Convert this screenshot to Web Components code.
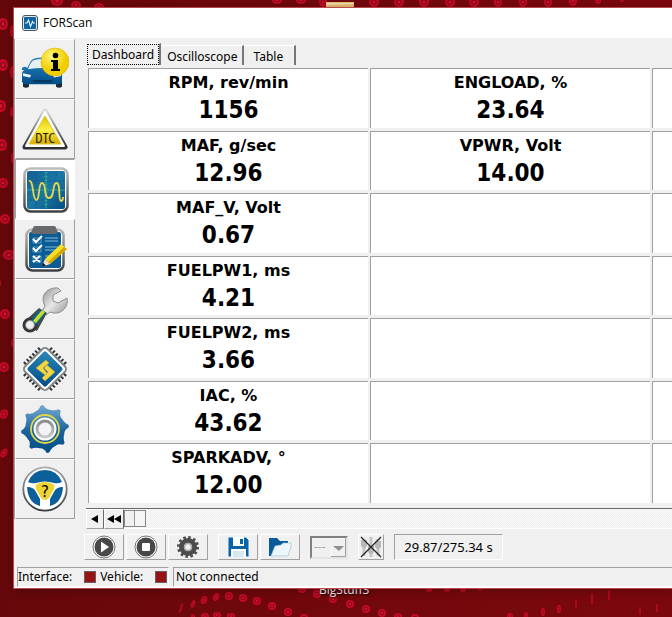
<!DOCTYPE html>
<html lang="en">
<head>
<meta charset="utf-8">
<title>FORScan</title>
<style>
    body {
        margin: 0;
        font: 12px/16px "Noto Sans", "DejaVu Sans", sans-serif;
        color: #000;
    }
</style>
</head>
<body>
<desktop-screen>
    <app-window caption="FORScan">
        <side-bar slot="side"></side-bar>
        <tab-strip></tab-strip>
        <gauge-grid>
            <gauge-tile label="RPM, rev/min">1156</gauge-tile>
            <gauge-tile label="MAF, g/sec">12.96</gauge-tile>
            <gauge-tile label="MAF_V, Volt">0.67</gauge-tile>
            <gauge-tile label="FUELPW1, ms">4.21</gauge-tile>
            <gauge-tile label="FUELPW2, ms">3.66</gauge-tile>
            <gauge-tile label="IAC, %">43.62</gauge-tile>
            <gauge-tile label="SPARKADV, °">12.00</gauge-tile>
            <gauge-tile label="ENGLOAD, %">23.64</gauge-tile>
            <gauge-tile label="VPWR, Volt">14.00</gauge-tile>
            <gauge-tile></gauge-tile>
            <gauge-tile></gauge-tile>
            <gauge-tile></gauge-tile>
            <gauge-tile></gauge-tile>
            <gauge-tile></gauge-tile>
            <gauge-tile></gauge-tile>
            <gauge-tile></gauge-tile>
            <gauge-tile></gauge-tile>
            <gauge-tile></gauge-tile>
            <gauge-tile></gauge-tile>
            <gauge-tile></gauge-tile>
            <gauge-tile></gauge-tile>
        </gauge-grid>
        <time-scroller></time-scroller>
        <tool-bar>29.87/275.34 s</tool-bar>
        <status-bar slot="status">Not connected</status-bar>
    </app-window>
</desktop-screen>

<script>
// wallpaper rings: x, y, rx, ry, tilt
const RINGS = [
    [3, 24, 5, 6, 0], [3, 65, 5, 6, 0], [1, 106, 5, 6, 0], [2, 145, 5, 6, 0], [3, 183, 5, 5, 0],
    [5, 219, 5, 5, 0], [9, 255, 6, 5, 0], [0, 283, 1, 3, 0], [5, 314, 5, 5, 20], [4, 367, 5, 5, 30],
    [4, 414, 4, 5, 30], [4, 453, 3, 5, 30], [13, 31, 3, 6, 0], [13, 72, 3, 6, 0], [13, 112, 3, 5, 0],
    [13, 158, 2, 5, 0], [13, 343, 2, 4, 0],
    [57, 1, 6, 5, 0], [76, 5, 5, 4, 0], [99, 7, 5, 4, 0], [277, 0, 5, 4, 0], [301, 0, 5, 4, 0], [323, 2, 4, 5, 0],
    [374, 2, 5, 5, 0], [399, 2, 5, 5, 0], [424, 2, 5, 5, 0], [450, 2, 5, 5, 0], [474, 2, 5, 5, 0],
    [498, 2, 4, 5, 0], [523, 2, 4, 5, 0], [548, 2, 4, 5, 0], [573, 1, 4, 5, 0], [598, 0, 3, 4, 0], [622, 0, 2, 2, 0],
    [181, 608, 1, 5, 15], [193, 604, 2, 4, 20], [204, 600, 3, 4, 25], [216, 597, 3, 4, 25], [229, 596, 4, 4, 0],
    [243, 598, 4, 4, 0], [257, 601, 4, 4, 0], [272, 606, 4, 4, 0], [288, 612, 4, 4, 0], [304, 618, 4, 4, 0],
    [193, 617, 2, 3, 0], [205, 616, 4, 3, 0], [217, 615, 4, 3, 0], [231, 616, 4, 3, 0],
    [302, 589, 4, 4, 0], [317, 594, 4, 4, 0], [333, 599, 4, 4, 0], [350, 604, 4, 4, 0], [366, 609, 4, 4, 0],
    [382, 613, 4, 4, 0], [398, 616, 4, 3, 0], [415, 618, 4, 4, 0],
    [429, 589, 3, 3, 0], [447, 589, 3, 3, 0], [463, 589, 3, 3, 0], [480, 589, 2, 2, 0],
    [510, 616, 3, 3, 0], [526, 615, 2, 3, 0], [543, 612, 2, 4, 0], [559, 609, 2, 4, 0], [576, 604, 1, 4, 0],
    [592, 599, 1, 5, 0], [609, 595, 1, 5, 0], [640, 611, 1, 4, 0], [657, 608, 1, 4, 0]
];

class DesktopScreen extends HTMLElement {
    connectedCallback() {
        const rings = RINGS.map(([x, y, rx, ry, r]) =>
            `<g transform="translate(${x} ${y}) rotate(${r})"><ellipse rx="${rx}" ry="${ry}" fill="#c80a26"/><ellipse rx="${rx * .55}" ry="${ry * .55}" fill="#800914"/><ellipse rx="${rx * .32}" ry="${ry * .32}" fill="#d8122e"/></g>`
        ).join('');
        this.attachShadow({ mode: 'open' });
        this.shadowRoot.innerHTML = `
            <style>
                :host {
                    display: flex;
                    position: relative;
                    box-sizing: border-box;
                    min-height: 100vh;
                    padding: 7px 0 28px 13px;
                    overflow: hidden;
                    background: linear-gradient(90deg, #66080b, #72080c 50%, #7c080c);
                }
                .wallpaper {
                    position: absolute;
                    left: 0;
                    top: 0;
                }
                .shortcut {
                    position: absolute;
                    left: 319px;
                    bottom: 19px;
                    color: #f4eeee;
                    text-shadow: 1px 1px 2px #000;
                    font-family: "Open Sans", "Noto Sans", sans-serif;
                }
                ::slotted(app-window) {
                    flex: 1;
                    min-width: 0;
                }
            </style>
            <svg class="wallpaper" width="672" height="617" aria-hidden="true">
                ${rings}
                <rect x="326" y="2" width="28" height="6" fill="#e5bd72"/>
                <path d="M327 3h26v1l-26 1z" fill="#f5dcb0"/>
            </svg>
            <span class="shortcut">BigStuff3</span>
            <slot></slot>
        `;
    }
}

class AppWindow extends HTMLElement {
    connectedCallback() {
        this.attachShadow({ mode: 'open' });
        this.shadowRoot.innerHTML = `
            <style>
                :host {
                    display: flex;
                    flex-direction: column;
                    position: relative;
                    background: #f0f0f0;
                    border: 1px solid #b9474e;
                    border-right: 0;
                    box-shadow: 0 2px 10px rgba(0, 0, 0, .25);
                }
                header {
                    display: flex;
                    align-items: center;
                    gap: 5px;
                    height: 30px;
                    padding-left: 8px;
                    background: #fff;
                    font-family: "Open Sans", "Noto Sans", sans-serif;
                }
                h1 {
                    margin: 0;
                    font-size: 12px;
                    font-weight: 400;
                }
                .body {
                    display: flex;
                    flex: 1;
                }
                main {
                    display: flex;
                    flex: 1;
                    flex-direction: column;
                    min-width: 0;
                    padding-left: 11px;
                }
            </style>
            <header>
                <svg width="16" height="16" viewBox="0 0 16 16" aria-hidden="true">
                    <rect x=".5" y=".5" width="15" height="15" rx="2.5" fill="#e2e8ec" stroke="#42545f"/>
                    <rect x="2" y="2" width="12" height="12" rx="1" fill="#0f64a0"/>
                    <path d="M3 8h2l1.500-3 2 6.500 2-5 1 1.500h1.500" fill="none" stroke="#d8f2ff" stroke-width="1.200"/>
                </svg>
                <h1>${this.getAttribute('caption')}</h1>
            </header>
            <div class="body">
                <slot name="side"></slot>
                <main><slot></slot></main>
            </div>
            <slot name="status"></slot>
        `;
    }
}

// eight-toothed outline round (24, 24)
function gearPath() {
    const at = (deg, r) => {
        const a = deg * Math.PI / 180;
        return `${(24 + r * Math.cos(a)).toFixed(1)} ${(24 + r * Math.sin(a)).toFixed(1)}`;
    };
    let d = '';
    for (let i = 0; i < 8; i++) {
        const a = -97 + i * 45;
        d += `${i ? 'L' : 'M'}${at(a - 3, 24)}L${at(a + 3, 24)}Q${at(a + 10, 19)} ${at(a + 22, 20)}Q${at(a + 34, 20)} ${at(a + 42, 24)}`;
    }
    return d + 'z';
}

const SIDE_ICONS = [
    ['Vehicle info', `
        <defs>
            <linearGradient id="body" x2="0" y2="1"><stop stop-color="#2f86be"/><stop offset="1" stop-color="#004c88"/></linearGradient>
            <radialGradient id="ball" cx=".4" cy=".3"><stop stop-color="#fff780"/><stop offset="1" stop-color="#f2cd00"/></radialGradient>
        </defs>
        <g transform="translate(0 4) scale(1 .84)">
            <path d="M2 36h6v9q-3 2-6 0zM35 36h6v9q-3 2-6 0z" fill="#1d2a33"/>
            <path d="M1 25q-1-4 4-4l1 2 4-9q2-4 11-4t12 4l4 9q5 6 4 12v5q-1 2-4 2H5q-3 0-4-3v-9q0-4 3-5z" fill="url(#body)"/>
            <path d="M7 24q3-10 6-11 8-2 17 0l5 11q-13-3-28 0z" fill="#e4f0f8"/>
            <path d="M2 29l8 2-1 3-7-2zM40 29l-8 2 1 3 7-2z" fill="#eef6fa"/>
            <path d="M11 37h21l-3 3H14z" fill="#06385f"/>
        </g>
        <circle cx="34" cy="17" r="14" fill="url(#ball)" stroke="#dcb400" stroke-width=".6"/>
        <circle cx="34.500" cy="10.500" r="2.800"/>
        <path d="M30 15h7v9h2v2h-9v-2h2v-7h-2z"/>`],
    ['Trouble codes', `
        <defs>
            <linearGradient id="rim" x2="0" y2="1"><stop stop-color="#d9d9d9"/><stop offset="1" stop-color="#2c3035"/></linearGradient>
            <linearGradient id="sign" x2="0" y2="1"><stop stop-color="#d9c000"/><stop offset=".5" stop-color="#fff04a"/><stop offset="1" stop-color="#d5aa00"/></linearGradient>
        </defs>
        <path d="M24 6L44 42H4z" fill="url(#rim)" stroke="url(#rim)" stroke-width="5" stroke-linejoin="round"/>
        <path d="M24 7L43 41H5z" fill="#fff" stroke="#fff" stroke-width="2" stroke-linejoin="round"/>
        <path d="M24 11L40 39H8z" fill="url(#sign)" stroke="#e2c41c" stroke-linejoin="round"/>
        <text x="24" y="38" text-anchor="middle" font-family="Open Sans, sans-serif" font-size="15" font-stretch="condensed" fill="#252000">DTC</text>`],
    ['Live data', `
        <defs>
            <linearGradient id="frame" x2="0" y2="1"><stop stop-color="#bdbdbd"/><stop offset="1" stop-color="#3f4144"/></linearGradient>
            <linearGradient id="screen" x2="1" y2="1"><stop stop-color="#145f90"/><stop offset=".5" stop-color="#1a78a5"/><stop offset="1" stop-color="#075083"/></linearGradient>
        </defs>
        <rect x="2.500" y="2.500" width="43" height="43" rx="6" fill="#fff" stroke="url(#frame)" stroke-width="2.500"/>
        <rect x="5" y="5" width="38" height="38" rx="2" fill="url(#screen)"/>
        <path d="M5 15h38M5 34h38M14 5v38M34 5v38" stroke="#115582" stroke-dasharray="1 1"/>
        <path d="M24 6v36M5 24h38" stroke="#33a48f" stroke-width="1"/>
        <path d="M24 6v36" stroke="#33a48f" stroke-width="3" stroke-dasharray="1 3"/>
        <path d="M7 15C12 14 10 34 14.500 34C18 34 16 17 20 17C25 17 21 32 27 32C33 32 30 17 34.500 17C39 17 36 35 39 35C40.500 35 41 33 41 31" fill="none" stroke="#ead64b" stroke-width="1.800"/>`],
    ['Tests', `
        <defs>
            <linearGradient id="board" x2="0" y2="1"><stop stop-color="#b8b8b8"/><stop offset="1" stop-color="#3f4144"/></linearGradient>
        </defs>
        <rect x="5.500" y="4.500" width="37" height="41" rx="6" fill="#fff" stroke="url(#board)" stroke-width="2.500"/>
        <rect x="8" y="7" width="32" height="36" rx="2" fill="#0b5c94"/>
        <path d="M14 1h19q2 0 2 2l2 4q-1 2-3 2H13q-3 0-3-2l2-4q0-2 2-2z" fill="#68696c"/>
        <path d="M12 13h8v5h-8zM12 22h8v5h-8zM12 31h8v6h-8z" fill="none" stroke="#7db4d2" stroke-width=".7"/>
        <path d="M12 14l3 3 6-6M12 23l3 3 6-6M12 31l7 6M19 31l-7 6" fill="none" stroke="#fff" stroke-width="2"/>
        <path d="M24 13h13M24 16h13M24 22h13M24 25h10M24 31h6" stroke="#7fb9d7"/>
        <path d="M24 34l16-15 6 5-17 15z" fill="#f8df25"/>
        <path d="M27 37l16-15 3 2-17 15z" fill="#d2a800"/>
        <path d="M24 34l5 5-8 3z" fill="#f2e2c8"/>
        <path d="M21 42l1-4 3 2.500z" fill="#111"/>`],
    ['Service functions', `
        <defs>
            <linearGradient id="steel" x2="1" y2="1"><stop stop-color="#8e9092"/><stop offset=".5" stop-color="#e8e8e8"/><stop offset="1" stop-color="#909294"/></linearGradient>
        </defs>
        <path d="M24 21C18 10 27 2 37 3l3 3-8 4v6l5 2 9-5c2 10-7 18-17 14l-4 3-4-4z" fill="url(#steel)" stroke="#8a8c8e"/>
        <path d="M18 23l8 5-10 18-14-8z" fill="#434950"/>
        <circle cx="9" cy="40" r="7.500" fill="#34383d"/>
        <path d="M18 25l6 4-9 11-5-4z" fill="#0a6c86"/>
        <path d="M21 25l3 2-9 11-3-2z" fill="#c8df32"/>
        <circle cx="9" cy="40" r="4.200" fill="#f0f0f0" stroke="#b5b7b8"/>`],
    ['Module configuration', `
        <defs>
            <linearGradient id="chip" x2="1" y2="1"><stop stop-color="#2b88b8"/><stop offset="1" stop-color="#004c87"/></linearGradient>
        </defs>
        <g transform="rotate(45 24 24)">
            <path d="M14 4v40M18 4v40M22 4v40M26 4v40M30 4v40M34 4v40M4 14h40M4 18h40M4 22h40M4 26h40M4 30h40M4 34h40" stroke="#303438" stroke-width="2"/>
            <rect x="8" y="8" width="32" height="32" rx="4" fill="#fff" stroke="#85888b" stroke-width="2"/>
            <rect x="11" y="11" width="26" height="26" rx="2" fill="url(#chip)"/>
        </g>
        <path d="M25 15l-10 8 9 7 2-2-4-5 6-5zM26 20l8 7-10 9-3-3 6-6-4-4z" fill="#f1d747" stroke="#bca22b" stroke-width=".5"/>`],
    ['Settings', `
        <defs>
            <linearGradient id="gear" x2="0" y2="1"><stop stop-color="#75abd1"/><stop offset=".55" stop-color="#17629b"/><stop offset="1" stop-color="#034c84"/></linearGradient>
            <linearGradient id="nut" x2="0" y2="1"><stop stop-color="#888b8e"/><stop offset="1" stop-color="#c9cacb"/></linearGradient>
        </defs>
        <path d="${gearPath()}" fill="url(#gear)"/>
        <circle cx="24" cy="24" r="14" fill="none" stroke="#e4d646" stroke-width="1.800"/>
        <circle cx="24" cy="24" r="9" fill="none" stroke="#fff" stroke-width="5"/>
        <circle cx="24" cy="24" r="8" fill="#f4f4f4" stroke="url(#nut)" stroke-width="3"/>`],
    ['Help', `
        <defs>
            <linearGradient id="ring" x2="0" y2="1"><stop stop-color="#a8abad"/><stop offset="1" stop-color="#393d40"/></linearGradient>
        </defs>
        <circle cx="24" cy="24" r="21.700" fill="#fff" stroke="url(#ring)" stroke-width="1.800"/>
        <path d="M7 17Q12 5 24 5t17 12q-4 2-8 1-9-3-18 0-4 1-8-1z" fill="#0b609b"/>
        <path d="M6 22q7 0 9 5l4 7v7Q7 38 6 22zM42 22q-7 0-9 5l-4 7v7q12-3 13-19z" fill="#0b609b"/>
        <path d="M16 19q8-4 16 0 2 1 1 5l-5 9q-4 4-8 0l-5-9q-1-4 1-5z" fill="#edd433"/>
        <text x="24" y="32" text-anchor="middle" font-family="DejaVu Sans, sans-serif" font-size="15">?</text>`]
];

class SideBar extends HTMLElement {
    connectedCallback() {
        const buttons = SIDE_ICONS.map(([name, art], i) => `
            <button type="button" aria-label="${name}"${i === 2 ? ' class="active" aria-pressed="true"' : ''}>
                <svg width="48" height="48" viewBox="0 0 48 48">${art}</svg>
            </button>`).join('');
        this.attachShadow({ mode: 'open' });
        this.shadowRoot.innerHTML = `
            <style>
                :host { display: block; padding-top: 1px; }
                nav {
                    display: flex;
                    flex-direction: column;
                    border-left: 1px solid #a0a0a0;
                }
                button {
                    display: flex;
                    align-items: center;
                    justify-content: center;
                    box-sizing: border-box;
                    width: 60px;
                    height: 60px;
                    padding: 0;
                    background: #f0f0f0;
                    border: 1px solid #fff;
                    border-right-color: #a0a0a0;
                    border-bottom-color: #a0a0a0;
                }
                button.active {
                    padding: 2px 0 0 2px;
                    background: #fff;
                    border-color: #a0a0a0 #fff #fff #a0a0a0;
                }
            </style>
            <nav>${buttons}</nav>
        `;
    }
}

class TabStrip extends HTMLElement {
    connectedCallback() {
        this.attachShadow({ mode: 'open' });
        this.shadowRoot.innerHTML = `
            <style>
                :host {
                    display: block;
                    padding: 5px 0 0 1px;
                }
                div {
                    display: flex;
                    align-items: flex-end;
                    height: 22px;
                    padding-bottom: 3px;
                }
                button {
                    box-sizing: border-box;
                    height: 20px;
                    padding: 2px 5px 0 6px;
                    border: 0;
                    border-top: 1px solid #fff;
                    border-right: 2px solid #777;
                    background: #f0f0f0;
                    font: inherit;
                    line-height: 16px;
                }
                button[aria-selected="true"] {
                    height: 22px;
                    padding: 0;
                }
                button:last-child { padding: 2px 11px 0 9px; }
                span {
                    display: block;
                    padding: 2px 4px 1px;
                    border: 1px dotted #000;
                }
            </style>
            <div role="tablist">
                <button type="button" role="tab" aria-selected="true"><span>Dashboard</span></button>
                <button type="button" role="tab" aria-selected="false">Oscilloscope</button>
                <button type="button" role="tab" aria-selected="false">Table</button>
            </div>
        `;
    }
}

class GaugeGrid extends HTMLElement {
    connectedCallback() {
        this.attachShadow({ mode: 'open' });
        this.shadowRoot.innerHTML = `
            <style>
                :host {
                    display: grid;
                    flex: 1;
                    grid-auto-flow: column;
                    grid-template-rows: repeat(7, 1fr);
                    grid-auto-columns: 280px;
                    gap: 3px 2px;
                    margin-left: 2px;
                    padding-bottom: 5px;
                    overflow: hidden;
                }
            </style>
            <slot></slot>
        `;
    }
}

class GaugeTile extends HTMLElement {
    connectedCallback() {
        const label = this.getAttribute('label') || '';
        this.attachShadow({ mode: 'open' });
        this.shadowRoot.innerHTML = `
            <style>
                :host {
                    display: flex;
                    flex-direction: column;
                    align-items: center;
                    background: #fff;
                    border-top: 1px solid #a0a0a0;
                    border-left: 1px solid #a0a0a0;
                    font-family: "DejaVu Sans", sans-serif;
                    font-weight: 700;
                }
                .label {
                    font-size: 16px;
                    line-height: 27px;
                }
                .value {
                    font-family: "DejaVu Sans Condensed", "DejaVu Sans", sans-serif;
                    font-stretch: condensed;
                    font-size: 24px;
                    line-height: 29px;
                }
            </style>
            ${label ? `<div class="label">${label}</div><div class="value"><slot></slot></div>` : ''}
        `;
    }
}

class TimeScroller extends HTMLElement {
    connectedCallback() {
        this.attachShadow({ mode: 'open' });
        this.shadowRoot.innerHTML = `
            <style>
                :host {
                    display: flex;
                    height: 20px;
                    background: #f0f0f0;
                    border-top: 1px solid #696969;
                }
                button {
                    display: flex;
                    align-items: center;
                    justify-content: center;
                    box-sizing: border-box;
                    width: 18px;
                    padding: 0;
                    border: 1px solid #fff;
                    border-right-color: #696969;
                    border-bottom-color: #a0a0a0;
                    background: #f0f0f0;
                }
                button + button { width: 20px; }
                input {
                    flex: 1;
                    min-width: 0;
                    height: 19px;
                    margin: 0;
                    appearance: none;
                    background: repeating-conic-gradient(#fff 0 25%, #eaeaea 0 50%) 0 0 / 2px 2px;
                    border-bottom: 1px solid #fff;
                }
                input::-webkit-slider-thumb {
                    appearance: none;
                    box-sizing: border-box;
                    width: 22px;
                    height: 17px;
                    border: 1px solid #888;
                    background: linear-gradient(90deg, #f0f0f0 9px, #999 9px, #999 10px, #f5f5f5 10px);
                }
            </style>
            <button type="button" aria-label="Back"><svg width="8" height="8"><path d="M7 0v8L0 4z"/></svg></button>
            <button type="button" aria-label="Fast back"><svg width="14" height="8"><path d="M7 0v8L0 4zM14 0v8L7 4z"/></svg></button>
            <input type="range" min="0" max="100" value="0" aria-label="Position">
        `;
    }
}

class ToolBar extends HTMLElement {
    connectedCallback() {
        this.attachShadow({ mode: 'open' });
        this.shadowRoot.innerHTML = `
            <style>
                :host {
                    display: flex;
                    align-items: center;
                    gap: 2px;
                    height: 26px;
                    padding: 5px 0 7px;
                    margin-left: -2px;
                }
                button, output {
                    display: flex;
                    align-items: center;
                    justify-content: center;
                    box-sizing: border-box;
                    height: 26px;
                    padding: 0;
                    background: #f0f0f0;
                    border: 1px solid #fff;
                    border-right-color: #a0a0a0;
                    border-bottom-color: #a0a0a0;
                }
                button { width: 40px; }
                .group {
                    display: flex;
                    gap: 2px;
                    margin-right: 8px;
                }
                .picker {
                    display: grid;
                    align-items: center;
                    width: 38px;
                    margin-right: 8px;
                }
                .picker > * { grid-area: 1 / 1; }
                select {
                    box-sizing: border-box;
                    width: 38px;
                    height: 23px;
                    padding: 0 0 0 2px;
                    appearance: none;
                    border: 2px solid #808080;
                    border-right-color: #e4e4e4;
                    border-bottom-color: #e4e4e4;
                    border-radius: 0;
                    background: #f0f0f0;
                    color: #a0a0a0;
                    font: inherit;
                    opacity: 1;
                }
                .picker svg {
                    justify-self: end;
                    margin-right: 2px;
                    pointer-events: none;
                }
                .filter { width: 26px; margin-right: 8px; }
                output {
                    width: 109px;
                    border-color: #a0a0a0 #fff #fff #a0a0a0;
                    font-size: 13px;
                }
            </style>
            <div class="group">
                <button type="button" aria-label="Play"><svg width="24" height="24" viewBox="0 0 24 24">
                    <circle cx="12" cy="12" r="11" fill="#fff" stroke="#777"/><circle cx="12" cy="12" r="9.500" fill="#484848"/>
                    <path d="M9 6.500v11l8-5.500z" fill="#fff"/></svg></button>
                <button type="button" aria-label="Stop"><svg width="24" height="24" viewBox="0 0 24 24">
                    <circle cx="12" cy="12" r="11" fill="#fff" stroke="#777"/><circle cx="12" cy="12" r="9.500" fill="#484848"/>
                    <rect x="8" y="8" width="8" height="8" rx="1" fill="#fff"/></svg></button>
                <button type="button" aria-label="Options"><svg width="24" height="24" viewBox="0 0 24 24">
                    <circle cx="12" cy="12" r="9.500" fill="none" stroke="#4c4c4c" stroke-width="3" stroke-dasharray="2.500 2.470"/>
                    <circle cx="12" cy="12" r="6.500" fill="none" stroke="#4c4c4c" stroke-width="5"/>
                    <circle cx="12" cy="12" r="3.500" fill="#f0f0f0" stroke="#aaa" stroke-width="1.500"/></svg></button>
            </div>
            <div class="group">
                <button type="button" aria-label="Save"><svg width="24" height="24" viewBox="0 0 24 24">
                    <path d="M2 2h18l3 3v17H2z" fill="#0865a5" stroke="#e5f4ff"/>
                    <path d="M7 2h11v9H7z" fill="#fff"/><path d="M14 4h3v5h-3z" fill="#0865a5"/>
                    <path d="M5 14h15v8H5z" fill="#fff"/><path d="M7 16h11v6H7z" fill="#d8e8f1"/></svg></button>
                <button type="button" aria-label="Open"><svg width="24" height="24" viewBox="0 0 24 24">
                    <path d="M1 3h8l3 3h8v5h2L18 21H1z" fill="#075b98"/>
                    <path d="M7 11l6-1 2-2h8v4l-3 9H3z" fill="#edf6fb" stroke="#9cc3db" stroke-width=".7"/></svg></button>
            </div>
            <div class="picker">
                <select aria-label="Channel" disabled><option>---</option></select>
                <svg width="15" height="19"><path d="M0 18V0h14" fill="none" stroke="#fff"/><path d="M14.500 0v18.500H0" fill="none" stroke="#a0a0a0"/><path d="M2 8h11l-5 5z" fill="#909090"/></svg>
            </div>
            <button class="filter" type="button" aria-label="Clear markers"><svg width="24" height="24" viewBox="0 0 24 24">
                <path d="M5 4v17M12 2v20M19 4v17" stroke="#c5c5c5" stroke-width="3"/>
                <path d="M2 5h6v6q-3 4-6 0zM9 11h6v6q-3 4-6 0zM16 6h6v6q-3 4-6 0z" fill="#b8b8b8"/>
                <path d="M2 2l20 20M22 2L2 22" stroke="#222" stroke-width="1.200"/></svg></button>
            <output aria-label="Playback time"><span><slot></slot></span></output>
        `;
    }
}

class StatusBar extends HTMLElement {
    connectedCallback() {
        this.attachShadow({ mode: 'open' });
        this.shadowRoot.innerHTML = `
            <style>
                :host {
                    display: flex;
                    gap: 4px;
                    padding-left: 3px;
                    border-bottom: 1px solid #fff;
                }
                div {
                    display: flex;
                    align-items: center;
                    box-sizing: border-box;
                    height: 20px;
                    border: 1px solid #a0a0a0;
                    border-right-color: #fff;
                    border-bottom-color: #fff;
                }
                .links {
                    gap: 4px;
                    width: 152px;
                }
                .message {
                    flex: 1;
                    padding-left: 2px;
                    border-right: 0;
                }
                i {
                    box-sizing: border-box;
                    width: 12px;
                    height: 12px;
                    margin-left: 8px;
                    background: #981313;
                    border: 1px solid #686060;
                }
            </style>
            <div class="links"><span>Interface:</span><i></i><span>Vehicle:</span><i></i></div>
            <div class="message"><span><slot></slot></span></div>
        `;
    }
}

customElements.define('desktop-screen', DesktopScreen);
customElements.define('app-window', AppWindow);
customElements.define('side-bar', SideBar);
customElements.define('tab-strip', TabStrip);
customElements.define('gauge-grid', GaugeGrid);
customElements.define('gauge-tile', GaugeTile);
customElements.define('time-scroller', TimeScroller);
customElements.define('tool-bar', ToolBar);
customElements.define('status-bar', StatusBar);
</script>
</body>
</html>
